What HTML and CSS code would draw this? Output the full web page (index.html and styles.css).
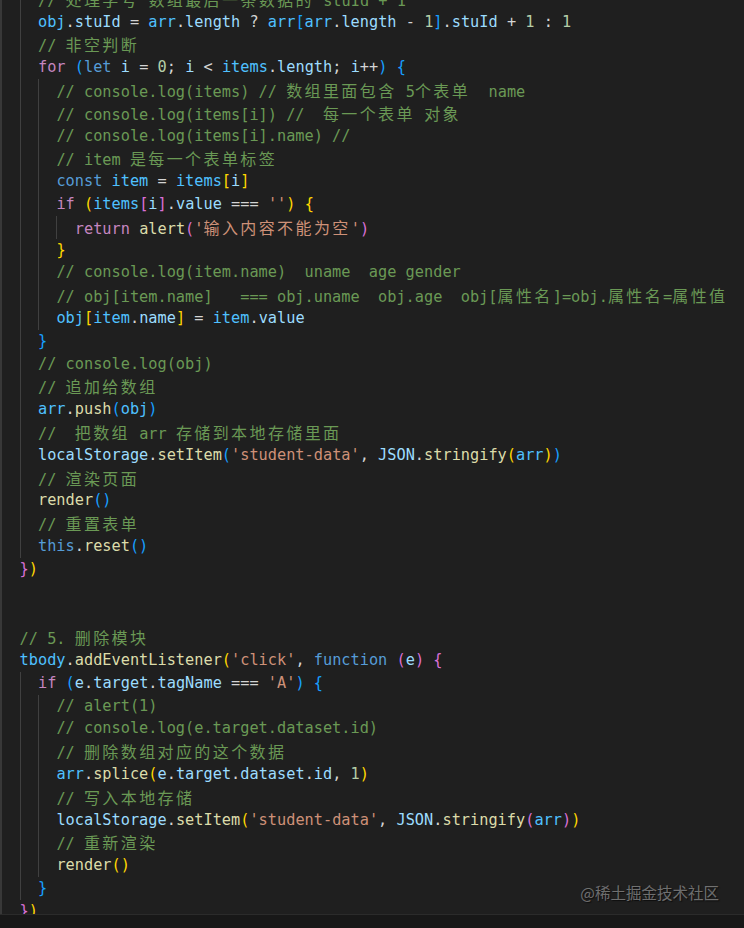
FILE: index.html
```html
<!DOCTYPE html>
<html lang="zh-CN">
<head>
<meta charset="utf-8">
<title>code</title>
<link rel="stylesheet" href="styles.css">
</head>
<body>
<div class="window">
  <div class="editor">
    <div class="code">
<div class="ln"><span class="g">  </span><span class="m">// <span class="z">处理学号</span> <span class="z">数组最后一条数据的</span> stuId + 1</span></div>
<div class="ln"><span class="g">  </span><span class="c">obj</span>.<span class="v">stuId</span> = <span class="c">arr</span>.<span class="v">length</span> ? <span class="c">arr</span><span class="b3">[</span><span class="c">arr</span>.<span class="v">length</span> - <span class="n">1</span><span class="b3">]</span>.<span class="v">stuId</span> + <span class="n">1</span> : <span class="n">1</span></div>
<div class="ln"><span class="g">  </span><span class="m">// <span class="z">非空判断</span></span></div>
<div class="ln"><span class="g">  </span><span class="k">for</span> <span class="b3">(</span><span class="s">let</span> <span class="v">i</span> = <span class="n">0</span>; <span class="v">i</span> &lt; <span class="c">items</span>.<span class="v">length</span>; <span class="v">i</span>++<span class="b3">)</span> <span class="b3">{</span></div>
<div class="ln"><span class="g">  </span><span class="g">  </span><span class="m">// console.log(items) // <span class="z">数组里面包含</span> 5<span class="z">个表单</span>  name</span></div>
<div class="ln"><span class="g">  </span><span class="g">  </span><span class="m">// console.log(items[i]) //  <span class="z">每一个表单</span> <span class="z">对象</span></span></div>
<div class="ln"><span class="g">  </span><span class="g">  </span><span class="m">// console.log(items[i].name) //</span></div>
<div class="ln"><span class="g">  </span><span class="g">  </span><span class="m">// item <span class="z">是每一个表单标签</span></span></div>
<div class="ln"><span class="g">  </span><span class="g">  </span><span class="s">const</span> <span class="c">item</span> = <span class="c">items</span><span class="b1">[</span><span class="v">i</span><span class="b1">]</span></div>
<div class="ln"><span class="g">  </span><span class="g">  </span><span class="k">if</span> <span class="b1">(</span><span class="c">items</span><span class="b2">[</span><span class="v">i</span><span class="b2">]</span>.<span class="v">value</span> === <span class="t">''</span><span class="b1">)</span> <span class="b1">{</span></div>
<div class="ln"><span class="g">  </span><span class="g">  </span><span class="g">  </span><span class="k">return</span> <span class="f">alert</span><span class="b2">(</span><span class="t">'<span class="z">输入内容不能为空</span>'</span><span class="b2">)</span></div>
<div class="ln"><span class="g">  </span><span class="g">  </span><span class="b1">}</span></div>
<div class="ln"><span class="g">  </span><span class="g">  </span><span class="m">// console.log(item.name)  uname  age gender</span></div>
<div class="ln"><span class="g">  </span><span class="g">  </span><span class="m">// obj[item.name]   === obj.uname  obj.age  obj[<span class="z">属性名</span>]=obj.<span class="z">属性名</span>=<span class="z">属性值</span></span></div>
<div class="ln"><span class="g">  </span><span class="g">  </span><span class="c">obj</span><span class="b1">[</span><span class="c">item</span>.<span class="v">name</span><span class="b1">]</span> = <span class="c">item</span>.<span class="v">value</span></div>
<div class="ln"><span class="g">  </span><span class="b3">}</span></div>
<div class="ln"><span class="g">  </span><span class="m">// console.log(obj)</span></div>
<div class="ln"><span class="g">  </span><span class="m">// <span class="z">追加给数组</span></span></div>
<div class="ln"><span class="g">  </span><span class="c">arr</span>.<span class="f">push</span><span class="b3">(</span><span class="c">obj</span><span class="b3">)</span></div>
<div class="ln"><span class="g">  </span><span class="m">//  <span class="z">把数组</span> arr <span class="z">存储到本地存储里面</span></span></div>
<div class="ln"><span class="g">  </span><span class="v">localStorage</span>.<span class="f">setItem</span><span class="b3">(</span><span class="t">'student-data'</span>, <span class="v">JSON</span>.<span class="f">stringify</span><span class="b1">(</span><span class="c">arr</span><span class="b1">)</span><span class="b3">)</span></div>
<div class="ln"><span class="g">  </span><span class="m">// <span class="z">渲染页面</span></span></div>
<div class="ln"><span class="g">  </span><span class="f">render</span><span class="b3">()</span></div>
<div class="ln"><span class="g">  </span><span class="m">// <span class="z">重置表单</span></span></div>
<div class="ln"><span class="g">  </span><span class="s">this</span>.<span class="f">reset</span><span class="b3">()</span></div>
<div class="ln"><span class="b2">}</span><span class="b1">)</span></div>
<div class="ln"> </div>
<div class="ln"> </div>
<div class="ln"><span class="m">// 5. <span class="z">删除模块</span></span></div>
<div class="ln"><span class="c">tbody</span>.<span class="f">addEventListener</span><span class="b1">(</span><span class="t">'click'</span>, <span class="s">function</span> <span class="b2">(</span><span class="v">e</span><span class="b2">)</span> <span class="b2">{</span></div>
<div class="ln"><span class="g">  </span><span class="k">if</span> <span class="b3">(</span><span class="v">e</span>.<span class="v">target</span>.<span class="v">tagName</span> === <span class="t">'A'</span><span class="b3">)</span> <span class="b3">{</span></div>
<div class="ln"><span class="g">  </span><span class="g">  </span><span class="m">// alert(1)</span></div>
<div class="ln"><span class="g">  </span><span class="g">  </span><span class="m">// console.log(e.target.dataset.id)</span></div>
<div class="ln"><span class="g">  </span><span class="g">  </span><span class="m">// <span class="z">删除数组对应的这个数据</span></span></div>
<div class="ln"><span class="g">  </span><span class="g">  </span><span class="c">arr</span>.<span class="f">splice</span><span class="b1">(</span><span class="v">e</span>.<span class="v">target</span>.<span class="v">dataset</span>.<span class="v">id</span>, <span class="n">1</span><span class="b1">)</span></div>
<div class="ln"><span class="g">  </span><span class="g">  </span><span class="m">// <span class="z">写入本地存储</span></span></div>
<div class="ln"><span class="g">  </span><span class="g">  </span><span class="v">localStorage</span>.<span class="f">setItem</span><span class="b1">(</span><span class="t">'student-data'</span>, <span class="v">JSON</span>.<span class="f">stringify</span><span class="b2">(</span><span class="c">arr</span><span class="b2">)</span><span class="b1">)</span></div>
<div class="ln"><span class="g">  </span><span class="g">  </span><span class="m">// <span class="z">重新渲染</span></span></div>
<div class="ln"><span class="g">  </span><span class="g">  </span><span class="f">render</span><span class="b1">()</span></div>
<div class="ln"><span class="g">  </span><span class="b3">}</span></div>
<div class="ln"><span class="b2">}</span><span class="b1">)</span></div>
    </div>
    <div class="watermark">@稀土掘金技术社区</div>
  </div>
  <div class="status"></div>
</div>
</body>
</html>
```

FILE: styles.css
```css
html, body {
  margin: 0;
  padding: 0;
  background: #1f1f1f;
}

.window {
  width: 744px;
  height: 928px;
  display: flex;
  flex-direction: column;
  overflow: hidden;
}

.editor {
  position: relative;
  height: 914px;
  flex: none;
  overflow: hidden;
  background: #1f1f1f;
  border-left: 2px solid #383838;
  padding-left: 17.6px;
  box-sizing: border-box;
}

.code {
  margin-top: -12.2px;
  font-family: "DejaVu Sans Mono", "Liberation Mono", monospace;
  font-size: 15.28px;
  color: #d4d4d4;
}

.ln {
  height: 22.8px;
  line-height: 22.8px;
  white-space: pre;
}

.g {
  display: inline-block;
  height: 22.8px;
  vertical-align: top;
  box-shadow: inset 1px 0 #404040;
}

.z {
  font-family: "Noto Sans CJK SC", sans-serif;
  font-size: 16px;
  letter-spacing: 2.4px;
}

.m { color: #6a9955; }
.k { color: #c586c0; }
.s { color: #569cd6; }
.c { color: #4fc1ff; }
.v { color: #9cdcfe; }
.f { color: #dcdcaa; }
.n { color: #b5cea8; }
.t { color: #ce9178; }
.b1 { color: #ffd700; }
.b2 { color: #da70d6; }
.b3 { color: #179fff; }

.watermark {
  position: absolute;
  right: 25px;
  top: 881px;
  font-family: "Noto Sans CJK SC", sans-serif;
  font-size: 15.5px;
  line-height: 22px;
  color: rgba(255, 255, 255, 0.38);
  text-shadow: 1px 1px 1px rgba(0, 0, 0, 0.6);
}

.status {
  flex: 1;
  background: #181818;
  border-top: 1px solid #2b2b2b;
}
```
